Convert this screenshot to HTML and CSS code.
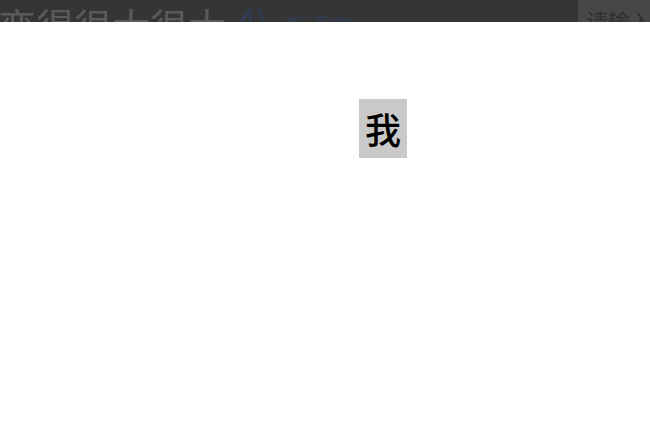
FILE: index.html
```html
<!DOCTYPE html>
<html lang="zh">
<head>
<meta charset="utf-8">
<link rel="stylesheet" href="styles.css">
</head>
<body>
<header class="topbar">
  <div class="brand">
    <span class="title">变得很大很大</span>
    <a class="lang"><span class="lang-num">4\</span><span class="lang-text">新语言</span></a>
  </div>
  <div class="search">请输入搜索内容</div>
</header>
<main class="content">
  <div class="glyph">我</div>
</main>
</body>
</html>
```
FILE: styles.css
```css
html, body {
  margin: 0;
  padding: 0;
  background: #ffffff;
}
body {
  font-family: "Noto Sans CJK SC", "Noto Sans", sans-serif;
}
.topbar {
  height: 22px;
  background: #353535;
  overflow: hidden;
  display: flex;
  justify-content: space-between;
}
.brand {
  display: flex;
  align-items: flex-start;
  white-space: nowrap;
  margin-left: -2px;
}
.title {
  font-size: 38px;
  line-height: 38px;
  color: #5a5a5a;
  padding-top: 6px;
  display: inline-block;
}
.lang {
  display: flex;
  align-items: flex-start;
  color: #303d54;
  margin-left: 10px;
}
.lang-num {
  font-size: 38px;
  line-height: 38px;
  padding-top: 2px;
}
.lang-text {
  font-size: 22px;
  line-height: 22px;
  padding-top: 13px;
  margin-left: 14px;
}
.search {
  width: 72px;
  height: 22px;
  background: #474747;
  color: #2e2e2e;
  font-size: 22px;
  line-height: 22px;
  white-space: nowrap;
  overflow: hidden;
  padding: 9px 0 0 8px;
  box-sizing: border-box;
}
.content {
  padding: 77px 0 0 359px;
}
.glyph {
  width: 48px;
  height: 59px;
  background: #c9c9c9;
  color: #000;
  font-size: 36px;
  font-weight: 500;
  line-height: 59px;
  text-align: center;
  font-family: "Noto Sans CJK SC", serif;
}
```
